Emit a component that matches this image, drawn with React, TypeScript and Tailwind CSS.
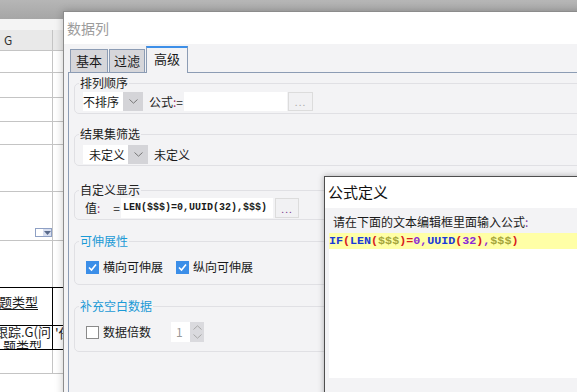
import React from "react";

const rows = [
  { h: 22 },
  { h: 25 },
  { h: 24 },
  { h: 23 },
  { h: 47 },
  { h: 49, drop: true },
  { h: 47, black: true },
  { h: 38, black: true, col: true, a: "题类型" },
  { h: 24, black: true, col: true, b: true },
  { h: 24 },
];

const Chevron = ({ up }: { up?: boolean }) => (
  <svg width="9" height="5" viewBox="0 0 9 5">
    <path
      d={up ? "M0.5 4.5L4.5 0.8L8.5 4.5" : "M0.5 0.5L4.5 4.2L8.5 0.5"}
      fill="none"
      stroke="currentColor"
      strokeWidth="1"
    />
  </svg>
);

const Check = ({ on }: { on?: boolean }) =>
  on ? (
    <span className="flex h-[13px] w-[13px] items-center justify-center bg-[#3b8ee8]">
      <svg width="11" height="11" viewBox="0 0 11 11">
        <path d="M2 5.5L4.5 8L9 2.5" fill="none" stroke="white" strokeWidth="1.6" />
      </svg>
    </span>
  ) : (
    <span className="h-[13px] w-[13px] border border-[#8a8a8a] bg-white" />
  );

const Select = ({ text, w, pl }: { text: string; w: string; pl: string }) => (
  <div className="flex h-[19px]">
    <div className={`${w} ${pl} bg-white leading-[19px]`}>{text}</div>
    <div className="flex w-[20px] items-center justify-center bg-[#d4d4d8] text-[#777]">
      <Chevron />
    </div>
  </div>
);

const Legend = ({ children, blue }: { children: React.ReactNode; blue?: boolean }) => (
  <legend
    className={`ml-[4px] px-[1px] text-[12px] leading-[16px] ${blue ? "text-[#1b9ad6]" : "text-[#222]"}`}
  >
    {children}
  </legend>
);

export default function App() {
  return (
    <div className="relative h-[392px] w-[577px] overflow-hidden bg-white font-['Noto_Sans_CJK_SC','Noto_Sans',sans-serif] text-[12px] text-[#1a1a1a]">
      {/* sheet behind */}
      <div className="h-[19px] bg-gradient-to-b from-[#b6b6b6] to-[#a6a6a6]" />
      <div className="h-[11px] bg-[#f4f4f4]" />
      <div className="flex h-[21px] border-b border-[#c4c4c4] bg-[#e9e9e9]">
        <div className="w-[53px] border-r border-[#c4c4c4] pl-[4px] text-[12px] leading-[20px] text-[#333]">
          G
        </div>
      </div>
      {rows.map((r, i) => (
        <div
          key={i}
          className={`flex border-b ${r.black ? "border-black" : "border-[#c4c4c4]"}`}
          style={{ height: r.h }}
        >
          <div
            className={`relative w-[53px] overflow-hidden border-r ${r.col ? "border-black" : "border-[#c4c4c4]"}`}
          >
            {r.drop && (
              <div className="absolute bottom-[3px] right-0 flex h-[9px] w-[17px] border border-[#8ea0c4]">
                <div className="w-[7px] bg-white" />
                <div className="flex flex-1 items-center justify-center bg-[#d8dff0]">
                  <svg width="7" height="4" viewBox="0 0 7 4">
                    <path d="M0 0H7L3.5 4Z" fill="#5a6b8c" />
                  </svg>
                </div>
              </div>
            )}
            {r.a && (
              <div className="-ml-[1px] pt-[6px] text-[13px] leading-[16px] underline underline-offset-2">
                {r.a}
              </div>
            )}
            {r.b && (
              <div className="-ml-[5px] -mt-[1px] whitespace-nowrap text-[13px] leading-[14px]">
                <div>跟踪.G(问</div>
                <div className="pl-[8px] underline">题类型</div>
              </div>
            )}
          </div>
          <div className="flex-1 overflow-hidden pl-[2px] text-[13px] leading-[14px]">
            {r.b ? "'任" : ""}
          </div>
        </div>
      ))}

      {/* 数据列 dialog */}
      <div className="absolute left-[63px] top-[11px] h-[400px] w-[540px] border border-[#8c8c8c] bg-[#f3f3f5] shadow-[0_0_8px_rgba(0,0,0,0.22)]">
        <div className="h-[32px] bg-white pl-[3px] text-[14px] leading-[32px] text-[#9c9c9c]">数据列</div>
        <div className="flex h-full flex-col pl-[4px] pt-[2px]">
          <div className="ml-[2px] flex h-[26px] items-end gap-[1px] text-[13px]">
            <div className="h-[23px] w-[38px] border border-b-0 border-[#8c9cb4] bg-[#d6d6da] text-center leading-[22px]">
              基本
            </div>
            <div className="h-[23px] w-[36px] border border-b-0 border-[#8c9cb4] bg-[#d6d6da] text-center leading-[22px]">
              过滤
            </div>
            <div className="relative z-10 -mb-px h-[27px] w-[42px] border-x border-t-[2px] border-x-[#8c9cb4] border-t-[#3d8fe8] bg-[#f3f3f5] text-center leading-[22px]">
              高级
            </div>
          </div>
          <div className="flex-1 border-l border-t border-[#8c9cb4] pl-[5px] pt-[2px]">
            <fieldset className="mr-[6px] rounded-[5px] border border-[#e0e0e4]">
              <Legend>排列顺序</Legend>
              <div className="flex h-[19px] items-center pb-0 pl-[8px]" style={{ marginBottom: 2, marginTop: 1 }}>
                <Select text="不排序" w="w-[40px]" pl="pl-0" />
                <span className="ml-[6px]">
                  公式<span className="text-[#a0306a]">:</span>=
                </span>
                <div className="ml-[1px] h-[19px] w-[103px] bg-white" />
                <div className="ml-[1px] h-[19px] w-[25px] border border-[#dcdcdc] bg-[#f1f1f3] text-center text-[10px] leading-[18px] tracking-[1px] text-[#aaa]">
                  ...
                </div>
              </div>
            </fieldset>

            <fieldset className="mr-[6px] mt-[12px] rounded-[5px] border border-[#e0e0e4]">
              <Legend>结果集筛选</Legend>
              <div className="flex h-[19px] items-center pl-[8px]" style={{ marginTop: 3, marginBottom: 1 }}>
                <Select text="未定义" w="w-[45px]" pl="pl-[6px]" />
                <span className="ml-[6px]">未定义</span>
              </div>
            </fieldset>

            <fieldset className="mr-[6px] mt-[16px] rounded-[5px] border border-[#e0e0e4]">
              <Legend>自定义显示</Legend>
              <div className="flex h-[20px] items-center pl-[10px]" style={{ marginBottom: 1 }}>
                <span>
                  值<span className="text-[#a0306a]">:</span>
                </span>
                <span className="ml-[13px]">=</span>
                <div className="ml-[1px] h-[20px] w-[152px] bg-white pl-[2px] font-['Liberation_Mono',monospace] text-[10px] font-bold leading-[20px]">
                  LEN($$$)=0,UUID(32),$$$)
                </div>
                <div className="ml-[2px] h-[20px] w-[24px] border border-[#dcdcdc] bg-[#f1f1f3] text-center text-[10px] leading-[19px] tracking-[1px] text-[#7a3a8a]">
                  ...
                </div>
              </div>
            </fieldset>

            <fieldset className="mr-[6px] mt-[13px] rounded-[5px] border border-[#e0e0e4]">
              <Legend blue>可伸展性</Legend>
              <div className="flex h-[16px] items-center pl-[11px]" style={{ marginTop: 10, marginBottom: 9 }}>
                <Check on />
                <span className="ml-[4px]">横向可伸展</span>
                <span className="ml-[13px]">
                  <Check on />
                </span>
                <span className="ml-[4px]">纵向可伸展</span>
              </div>
            </fieldset>

            <fieldset className="mr-[6px] mt-[13px] rounded-[5px] border border-[#e0e0e4]">
              <Legend blue>补充空白数据</Legend>
              <div className="flex h-[20px] items-center pl-[11px]" style={{ marginTop: 8, marginBottom: 9 }}>
                <Check />
                <span className="ml-[4px]">数据倍数</span>
                <div className="ml-[20px] flex h-[20px]">
                  <div className="w-[19px] bg-white pl-[5px] leading-[20px] text-[#999]">1</div>
                  <div className="flex w-[14px] flex-col items-center justify-center gap-[4px] bg-[#dadade] text-[#a8a8a8]">
                    <Chevron up />
                    <Chevron />
                  </div>
                </div>
              </div>
            </fieldset>
          </div>
        </div>
      </div>

      {/* 公式定义 dialog */}
      <div className="absolute left-[324px] top-[176px] h-[240px] w-[270px] border border-[#4e4e4e] bg-[#f3f3f5] shadow-[0_0_6px_rgba(0,0,0,0.3)]">
        <div className="h-[31px] bg-white pl-[3px] text-[15px] leading-[30px] text-[#111]">公式定义</div>
        <div className="pl-[8px] pt-[6px] text-[12px] leading-[16px]">
          请在下面的文本编辑框里面输入公式<span className="text-[#7a3a9a]">:</span>
        </div>
        <div className="ml-[4px] mt-[3px] h-[145px] bg-white">
          <div className="h-[16px] bg-[#ffffa6] font-['Liberation_Mono',monospace] text-[11.7px] font-bold leading-[16px]">
            <span className="text-[#1a3ad8]">IF</span>
            <span className="text-[#d82020]">(</span>
            <span className="text-[#1a3ad8]">LEN</span>
            <span className="text-[#d82020]">(</span>
            <span className="text-[#a4a43a]">$$$</span>
            <span className="text-[#d82020]">)=</span>
            <span className="text-[#8a2ad8]">0,</span>
            <span className="text-[#1a3ad8]">UUID</span>
            <span className="text-[#d82020]">(</span>
            <span className="text-[#8a2ad8]">32</span>
            <span className="text-[#d82020]">)</span>
            <span className="text-[#8a2ad8]">,</span>
            <span className="text-[#a4a43a]">$$$</span>
            <span className="text-[#d82020]">)</span>
          </div>
        </div>
      </div>
    </div>
  );
}
